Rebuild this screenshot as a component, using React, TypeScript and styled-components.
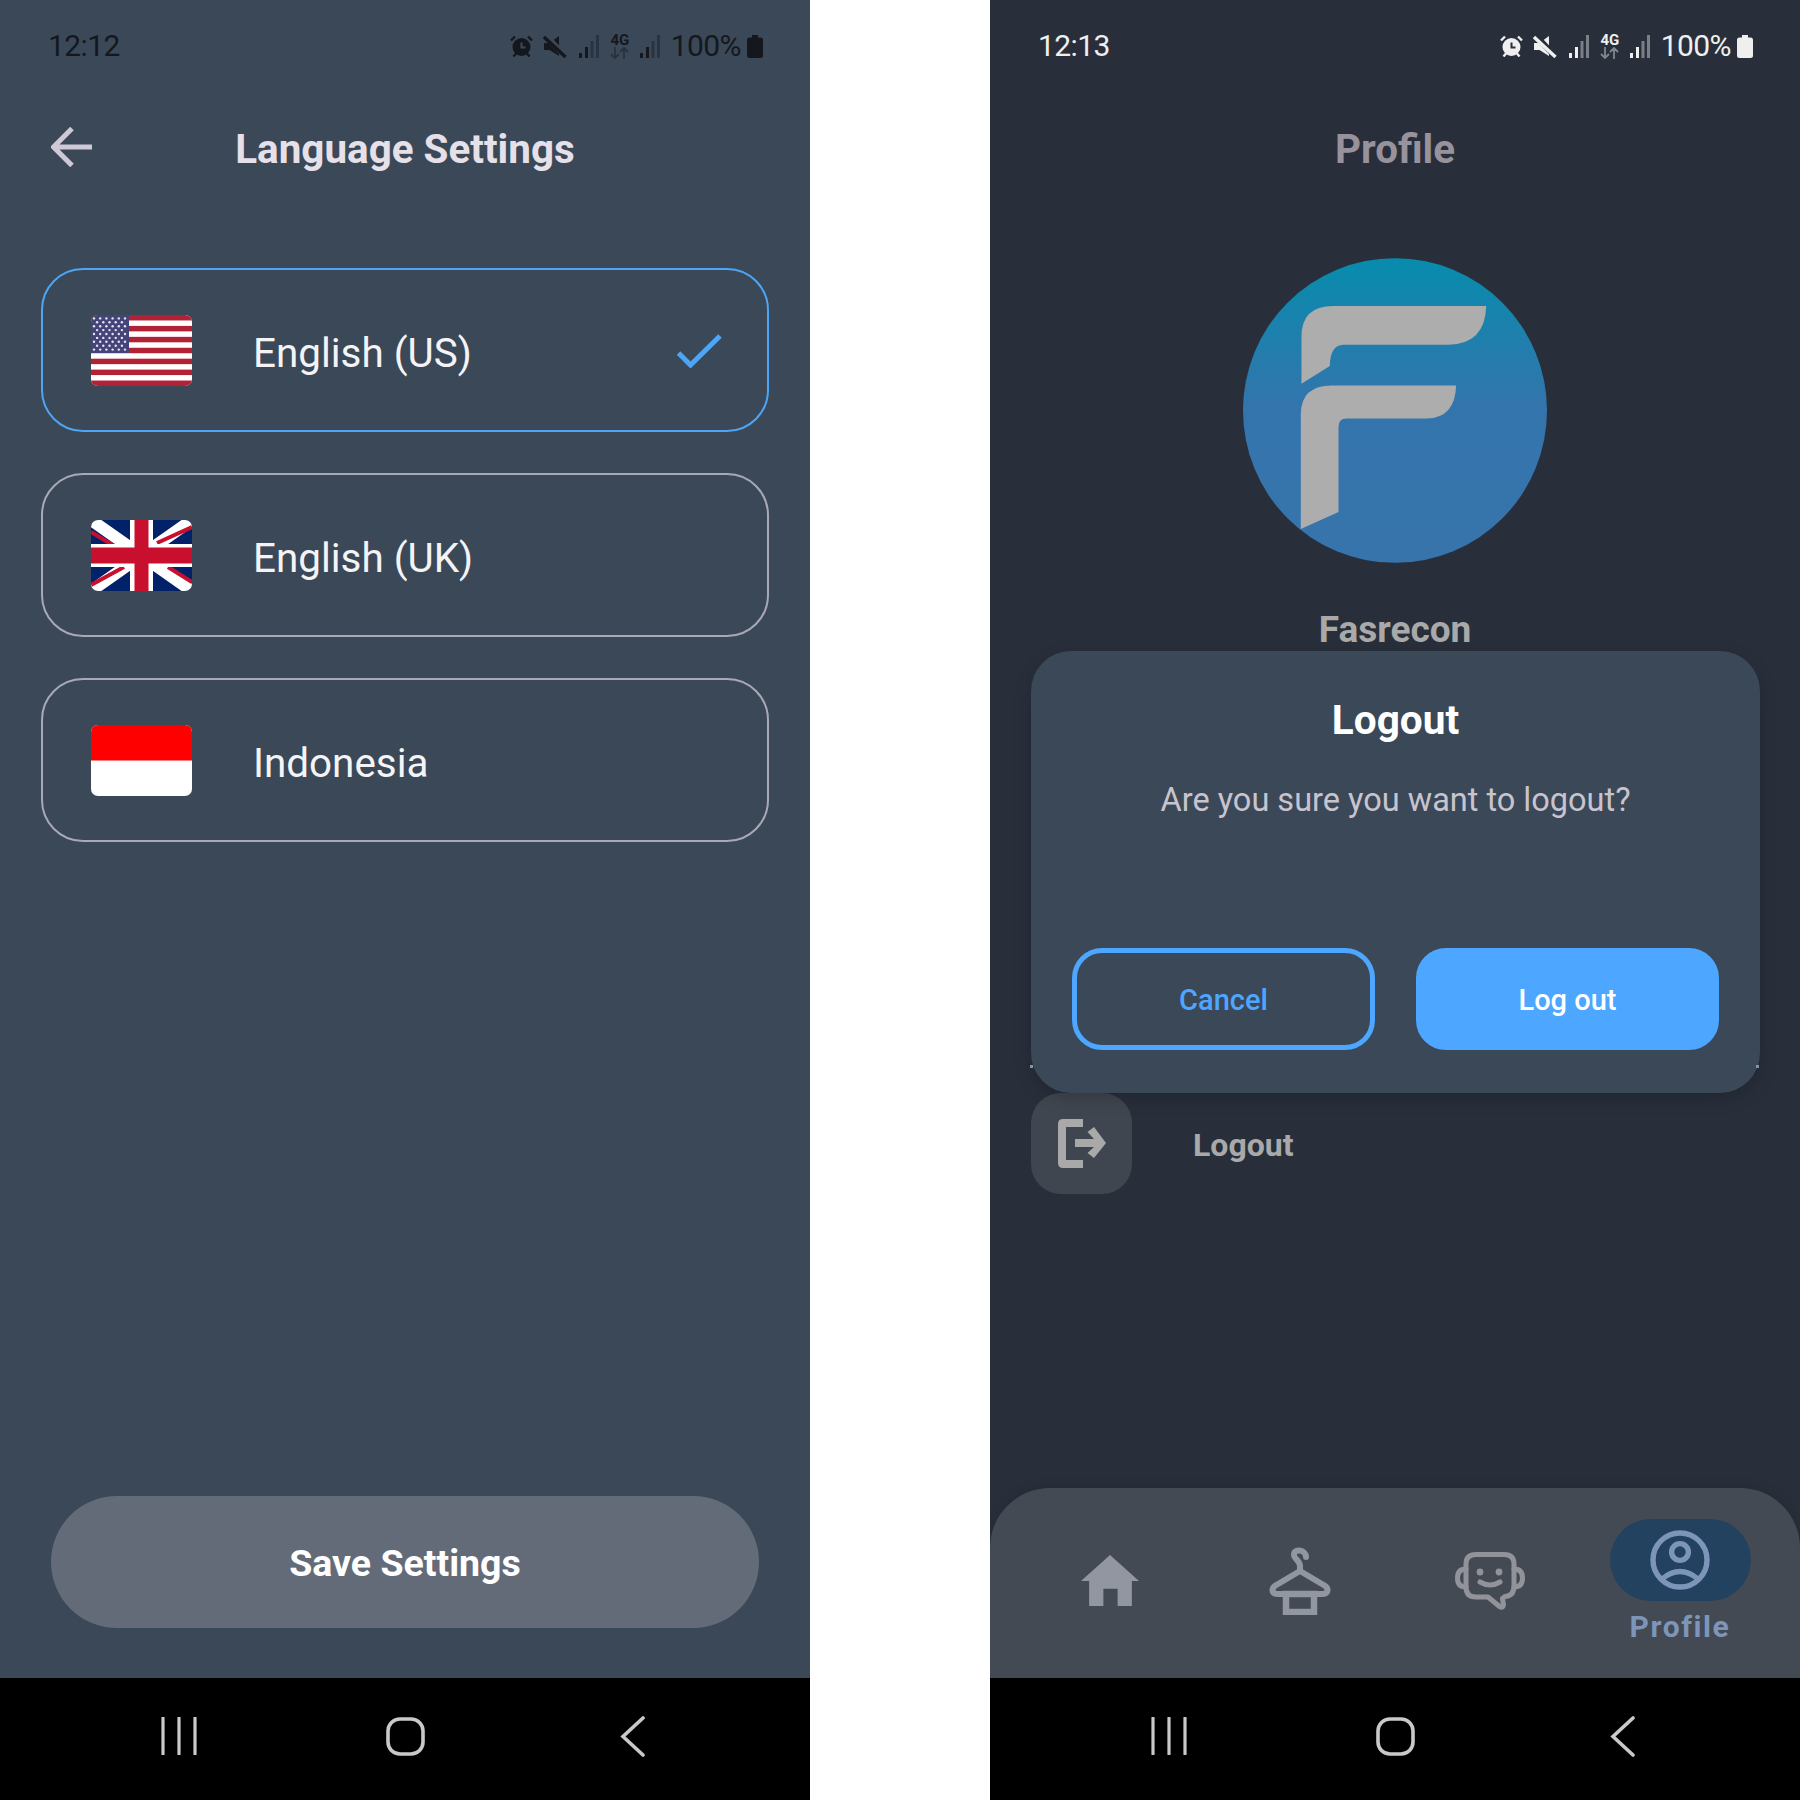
import React from "react";
import styled, { createGlobalStyle } from "styled-components";

const GlobalStyle = createGlobalStyle`
  html, body {
    margin: 0;
    padding: 0;
    background: #fff;
    font-family: Roboto, "Noto Sans", sans-serif;
  }
  * { box-sizing: border-box; }
`;

const Page = styled.div`
  width: 1800px;
  height: 1800px;
  display: flex;
  justify-content: space-between;
  background: #fff;
`;

const Phone = styled.div<{ $bg: string }>`
  --phone-bg: ${(p) => p.$bg};
  position: relative;
  width: 810px;
  height: 1800px;
  display: flex;
  flex-direction: column;
  background: ${(p) => p.$bg};
  overflow: hidden;
`;

const StatusBar = styled.div<{ $fg: string }>`
  height: 92px;
  flex: none;
  display: flex;
  align-items: center;
  justify-content: space-between;
  padding: 0 47px 0 48px;
  color: ${(p) => p.$fg};
`;

const Clock = styled.span`
  margin-top: -2px;
  font-size: 30px;
  font-weight: 400;
  letter-spacing: -0.6px;
`;

const StatusIcons = styled.div`
  display: flex;
  align-items: center;
`;

const Glyph = styled.svg<{ $after?: number }>`
  display: block;
  flex: none;
  margin-right: ${(p) => p.$after ?? 0}px;
`;

const NetStack = styled.div`
  width: 20px;
  margin-right: 10px;
  display: flex;
  flex-direction: column;
  align-items: center;
`;

const NetLabel = styled.span`
  font-size: 15px;
  line-height: 13px;
  font-weight: 700;
`;

const Percent = styled.span`
  margin: -2px 6px 0 0;
  font-size: 30px;
  letter-spacing: -0.6px;
`;

const Header = styled.div`
  position: relative;
  height: 112px;
  flex: none;
  padding-top: 4px;
  display: flex;
  align-items: center;
  justify-content: center;
`;

const BackButton = styled.button`
  position: absolute;
  left: 51px;
  top: 35px;
  padding: 0;
  border: none;
  background: transparent;
  color: #cfc8d6;
`;

const Title = styled.h1<{ $color: string }>`
  margin: 0;
  font-size: 40.4px;
  line-height: 48px;
  font-weight: 700;
  color: ${(p) => p.$color};
`;

const LanguageList = styled.div`
  margin-top: 64px;
  padding: 0 41px;
  display: flex;
  flex-direction: column;
  gap: 41px;
`;

const LanguageCard = styled.div<{ $selected?: boolean }>`
  height: 164px;
  display: flex;
  align-items: center;
  padding: 0 45px 0 48px;
  border: 2.4px solid ${(p) => (p.$selected ? "#4da6f5" : "#a9a9b6")};
  border-radius: 42px;
`;

const FlagFrame = styled.svg`
  display: block;
  flex: none;
  width: 101px;
  height: 71px;
  border-radius: 7px;
`;

const LanguageName = styled.span`
  margin-left: 61px;
  font-size: 40.4px;
  line-height: 48px;
  color: #f4f4f6;
  position: relative;
  top: 4px;
`;

const CheckMark = styled.svg`
  margin: 2px 0 0 auto;
  flex: none;
`;

const Filler = styled.div`
  flex: 1;
`;

const SaveButton = styled.button`
  margin: 0 51px 50px;
  height: 132px;
  flex: none;
  padding: 2px 0 0;
  border: none;
  border-radius: 66px;
  background: #636b79;
  color: #fff;
  font-family: inherit;
  font-size: 37.5px;
  font-weight: 700;
`;

const NavBar = styled.div`
  height: 122px;
  flex: none;
  padding: 0 66px 6px;
  background: #000;
  display: grid;
  grid-template-columns: repeat(3, 1fr);
  align-items: center;
  justify-items: center;
  color: #c9c9c9;
`;

const AvatarSlot = styled.div`
  margin-top: 54px;
  display: flex;
  flex-direction: column;
  align-items: center;
`;

const Avatar = styled.svg`
  display: block;
  width: 304px;
  height: 305px;
`;

const ProfileName = styled.div`
  margin-top: 46px;
  font-size: 37px;
  line-height: 42px;
  font-weight: 700;
  color: #a9a9a9;
`;

const Dialog = styled.div`
  position: absolute;
  left: 41px;
  top: 651px;
  width: 729px;
  height: 442px;
  padding: 45px 41px 43px;
  display: flex;
  flex-direction: column;
  align-items: center;
  background: #3b4858;
  border-radius: 40px;
  box-shadow: 0 6px 18px rgba(0, 0, 0, 0.18);

  &::before,
  &::after {
    content: "";
    position: absolute;
    top: 414px;
    width: 3px;
    height: 3px;
    background: #8d929a;
  }
  &::before {
    left: -1px;
  }
  &::after {
    right: 1px;
  }
`;

const DialogTitle = styled.div`
  font-size: 40.6px;
  line-height: 48px;
  font-weight: 700;
  color: #fff;
`;

const DialogText = styled.div`
  margin-top: 36px;
  font-size: 32.5px;
  line-height: 40px;
  color: #c8c4ce;
`;

const DialogActions = styled.div`
  margin-top: auto;
  align-self: stretch;
  display: grid;
  grid-template-columns: 1fr 1fr;
  gap: 41px;
`;

const DialogButton = styled.button<{ $primary?: boolean }>`
  height: 102px;
  padding: 2px 0 0;
  border-radius: 30px;
  border: 5.5px solid #4da6ff;
  background: ${(p) => (p.$primary ? "#4da6ff" : "transparent")};
  color: ${(p) => (p.$primary ? "#fff" : "#4da6ff")};
  font-family: inherit;
  font-size: 29px;
  font-weight: 500;
`;

const MenuRow = styled.div`
  position: absolute;
  top: 1093px;
  left: 41px;
  display: flex;
  align-items: center;
`;

const MenuIcon = styled.div`
  width: 101px;
  height: 101px;
  border-radius: 30px;
  background: #40464f;
  display: flex;
  align-items: center;
  justify-content: center;
  color: #a9a9a9;
`;

const MenuLabel = styled.span`
  margin-left: 61px;
  font-size: 32px;
  font-weight: 700;
  color: #a9a9a9;
  position: relative;
  top: 1px;
`;

const TabBar = styled.div`
  height: 190px;
  flex: none;
  padding: 0 25px 5px;
  display: grid;
  grid-template-columns: repeat(4, 1fr);
  background: #434a53;
  border-radius: 60px 60px 0 0;
  box-shadow: 0 -4px 10px rgba(0, 0, 0, 0.08);
`;

const Tab = styled.div<{ $color: string }>`
  display: flex;
  flex-direction: column;
  align-items: center;
  justify-content: center;
  color: ${(p) => p.$color};
`;

const ActivePill = styled.div`
  width: 141px;
  height: 82px;
  border-radius: 41px;
  background: #224260;
  display: flex;
  align-items: center;
  justify-content: center;
`;

const TabLabel = styled.span`
  margin-top: 10px;
  font-size: 30px;
  line-height: 32px;
  font-weight: 700;
  letter-spacing: 1.6px;
`;

const AlarmIcon = () => (
  <Glyph width="23" height="22" viewBox="0 0 23 22" $after={10}>
    <circle cx="11.5" cy="12" r="9" fill="currentColor" />
    <path d="M11.5 7.5V12.5H15.5" fill="none" stroke="var(--phone-bg)" strokeWidth="2" />
    <path d="M1 5.5L5 1.5M22 5.5L18 1.5M3.5 21.5L6 18.5M19.5 21.5L17 18.5" stroke="currentColor" strokeWidth="2.4" />
  </Glyph>
);

const MuteIcon = () => (
  <Glyph width="24" height="23" viewBox="0 0 24 23" $after={12}>
    <path d="M1 8H6.5L16 1V21L6.5 15H1Z" fill="currentColor" />
    <path d="M2 0L24 23" stroke="var(--phone-bg)" strokeWidth="6" />
    <path d="M1 2L22.5 22" stroke="currentColor" strokeWidth="3.4" />
  </Glyph>
);

const SignalIcon = ({ after }: { after: number }) => (
  <Glyph width="20" height="23" viewBox="0 0 20 23" $after={after}>
    <rect x="0" y="18" width="3" height="5" fill="currentColor" />
    <rect x="6" y="12" width="3" height="11" fill="currentColor" />
    <rect x="11.5" y="6" width="3" height="17" fill="currentColor" opacity="0.42" />
    <rect x="17" y="0" width="3" height="23" fill="currentColor" opacity="0.42" />
  </Glyph>
);

const ArrowsIcon = () => (
  <Glyph width="19" height="12" viewBox="0 0 19 12" opacity="0.45">
    <path
      d="M5 0V11M1 7L5 11L9 7M14 12V1M10 5L14 1L18 5"
      fill="none"
      stroke="currentColor"
      strokeWidth="1.8"
    />
  </Glyph>
);

const BatteryIcon = () => (
  <Glyph width="16" height="23" viewBox="0 0 16 23">
    <path
      d="M5 0H11V2.5H13.5Q16 2.5 16 5V20.5Q16 23 13.5 23H2.5Q0 23 0 20.5V5Q0 2.5 2.5 2.5H5Z"
      fill="currentColor"
    />
  </Glyph>
);

const SystemStatus = ({ time, fg }: { time: string; fg: string }) => (
  <StatusBar $fg={fg}>
    <Clock>{time}</Clock>
    <StatusIcons>
      <AlarmIcon />
      <MuteIcon />
      <SignalIcon after={11} />
      <NetStack>
        <NetLabel>4G</NetLabel>
        <ArrowsIcon />
      </NetStack>
      <SignalIcon after={11} />
      <Percent>100%</Percent>
      <BatteryIcon />
    </StatusIcons>
  </StatusBar>
);

const SystemNav = () => (
  <NavBar>
    <Glyph width="36" height="38" viewBox="0 0 36 38">
      <path d="M2 1V37M18 1V37M34 1V37" fill="none" stroke="currentColor" strokeWidth="3.2" strokeLinecap="round" />
    </Glyph>
    <Glyph width="39" height="39" viewBox="0 0 39 39">
      <rect x="2" y="2" width="35" height="35" rx="12" fill="none" stroke="currentColor" strokeWidth="3.6" />
    </Glyph>
    <Glyph width="28" height="41" viewBox="-4 0 28 41">
      <path d="M22 2L2 20.5L22 39" fill="none" stroke="currentColor" strokeWidth="3.6" strokeLinecap="round" />
    </Glyph>
  </NavBar>
);

const stripes = Array.from({ length: 13 }, (_, i) => i);
const starRows = Array.from({ length: 9 }, (_, i) => i);

const UsFlag = () => (
  <FlagFrame viewBox="0 0 101 71">
    <rect width="101" height="71" fill="#fff" />
    {stripes
      .filter((i) => i % 2 === 0)
      .map((i) => (
        <rect key={i} y={(i * 71) / 13} width="101" height={71 / 13} fill="#b22234" />
      ))}
    <rect width="38" height="38" fill="#45447a" />
    {starRows.map((row) =>
      Array.from({ length: row % 2 === 0 ? 6 : 5 }, (_, col) => (
        <circle
          key={`${row}-${col}`}
          cx={3 + col * 6.2 + (row % 2 === 0 ? 0 : 3.1)}
          cy={3.4 + row * 3.9}
          r="1.2"
          fill="#e4e4ee"
        />
      )),
    )}
  </FlagFrame>
);

const UkFlag = () => (
  <FlagFrame viewBox="0 0 101 71">
    <rect width="101" height="71" fill="#012169" />
    <path d="M0 0L101 71M101 0L0 71" stroke="#fff" strokeWidth="12" />
    <path d="M0 12L25 27M101 7L66 23M0 65L33 47M101 62L77 47" stroke="#c8102e" strokeWidth="4" />
    <path d="M50.5 0V71M0 35.5H101" stroke="#fff" strokeWidth="23" />
    <path d="M50.5 0V71" stroke="#c8102e" strokeWidth="14" />
    <path d="M0 35.5H101" stroke="#c8102e" strokeWidth="16" />
  </FlagFrame>
);

const IdFlag = () => (
  <FlagFrame viewBox="0 0 101 71">
    <rect width="101" height="71" fill="#fff" />
    <rect width="101" height="35.5" fill="#ff0000" />
  </FlagFrame>
);

const languages = [
  { name: "English (US)", flag: <UsFlag />, selected: true },
  { name: "English (UK)", flag: <UkFlag />, selected: false },
  { name: "Indonesia", flag: <IdFlag />, selected: false },
];

const FasreconAvatar = () => (
  <Avatar viewBox="130 55 910 912">
    <defs>
      <linearGradient id="avatarFill" x1="0" y1="0" x2="0" y2="1">
        <stop offset="0" stopColor="#078cad" />
        <stop offset="0.5" stopColor="#3474ac" />
        <stop offset="1" stopColor="#3874ac" />
      </linearGradient>
    </defs>
    <ellipse cx="585" cy="511" rx="455" ry="456" fill="url(#avatarFill)" />
    <path
      d="M305 431V290Q305 198 400 198H858Q855 312 745 314H430Q390 316 390 378Z"
      fill="#adadad"
    />
    <path
      d="M303 866V520Q305 436 395 436H768Q765 533 680 535H440Q416 535 416 560V815Z"
      fill="#adadad"
    />
  </Avatar>
);

const HomeIcon = () => (
  <Glyph width="58" height="51" viewBox="0 0 57 50">
    <path d="M28.5 0L57 25.5H50V50H36V33H22V50H8V25.5H0Z" fill="currentColor" />
  </Glyph>
);

const HangerIcon = () => (
  <Glyph width="62" height="68" viewBox="0 0 62 68">
    <g fill="none" stroke="currentColor" strokeWidth="6">
      <path d="M37 10C37 3 26 1 25 7C24 12 31 13 31 19V23" strokeLinecap="round" />
      <path d="M31 24L6.5 38.5C1.5 42 3 47 9 47H53C59 47 60.5 42 55.5 38.5Z" strokeLinejoin="round" />
      <rect x="17" y="47" width="28" height="18" strokeWidth="6.5" />
    </g>
  </Glyph>
);

const ChatFaceIcon = () => (
  <Glyph width="70" height="58" viewBox="0 0 70 58">
    <g fill="none" stroke="currentColor" strokeWidth="5" strokeLinecap="round" strokeLinejoin="round">
      <path d="M21 2.5H49Q59 2.5 59 12V34Q59 44 50 44.5L47.5 46.5L48.5 53Q48 56.5 44.5 54.5L33 45H21Q11 45 11 35V12Q11 2.5 21 2.5Z" />
      <path d="M11 17Q2.5 17 2.5 26Q2.5 35 11 35M59 17Q67.5 17 67.5 26Q67.5 35 59 35" />
      <path d="M25 30Q35 36 45 30" />
    </g>
    <circle cx="25" cy="20" r="3.4" fill="currentColor" />
    <circle cx="44" cy="20" r="3.4" fill="currentColor" />
  </Glyph>
);

const PersonIcon = () => (
  <Glyph width="60" height="60" viewBox="0 0 60 60">
    <g fill="none" stroke="currentColor" strokeWidth="5.4">
      <circle cx="30" cy="30" r="27" />
      <circle cx="30" cy="22" r="8.4" />
      <path d="M12 49Q30 34 48 49" />
    </g>
  </Glyph>
);

const LogoutIcon = () => (
  <Glyph width="48" height="49" viewBox="0 0 48 49">
    <path
      d="M25 0H5Q0 0 0 5V44Q0 49 5 49H25V41H8V8H25ZM36 8L48 24L36 39L29.5 34L36 28H17V20H36L29.5 13Z"
      fill="currentColor"
    />
  </Glyph>
);

export default function App() {
  return (
    <Page>
      <GlobalStyle />
      <Phone $bg="#3b4858">
        <SystemStatus time="12:12" fg="#14181e" />
        <Header>
          <BackButton type="button">
            <Glyph width="41" height="40" viewBox="0 0 41 40">
              <path
                d="M41 20H3M21 1.5L2.5 20L21 38.5"
                fill="none"
                stroke="currentColor"
                strokeWidth="5"
              />
            </Glyph>
          </BackButton>
          <Title $color="#e6e0e9">Language Settings</Title>
        </Header>
        <LanguageList>
          {languages.map((lang) => (
            <LanguageCard key={lang.name} $selected={lang.selected}>
              {lang.flag}
              <LanguageName>{lang.name}</LanguageName>
              {lang.selected && (
                <CheckMark width="45" height="34" viewBox="0 0 45 34">
                  <path d="M1.5 19L13.5 31L43 2" fill="none" stroke="#4da6f5" strokeWidth="5" />
                </CheckMark>
              )}
            </LanguageCard>
          ))}
        </LanguageList>
        <Filler />
        <SaveButton type="button">Save Settings</SaveButton>
        <SystemNav />
      </Phone>

      <Phone $bg="#282f3b">
        <SystemStatus time="12:13" fg="#efefef" />
        <Header>
          <Title $color="#97929b">Profile</Title>
        </Header>
        <AvatarSlot>
          <FasreconAvatar />
          <ProfileName>Fasrecon</ProfileName>
        </AvatarSlot>
        <MenuRow>
          <MenuIcon>
            <LogoutIcon />
          </MenuIcon>
          <MenuLabel>Logout</MenuLabel>
        </MenuRow>
        <Filler />
        <TabBar>
          <Tab $color="#9296a0">
            <HomeIcon />
          </Tab>
          <Tab $color="#9296a0">
            <HangerIcon />
          </Tab>
          <Tab $color="#92929a">
            <ChatFaceIcon />
          </Tab>
          <Tab $color="#7d95b8">
            <ActivePill>
              <PersonIcon />
            </ActivePill>
            <TabLabel>Profile</TabLabel>
          </Tab>
        </TabBar>
        <SystemNav />
        <Dialog>
          <DialogTitle>Logout</DialogTitle>
          <DialogText>Are you sure you want to logout?</DialogText>
          <DialogActions>
            <DialogButton type="button">Cancel</DialogButton>
            <DialogButton type="button" $primary>
              Log out
            </DialogButton>
          </DialogActions>
        </Dialog>
      </Phone>
    </Page>
  );
}
